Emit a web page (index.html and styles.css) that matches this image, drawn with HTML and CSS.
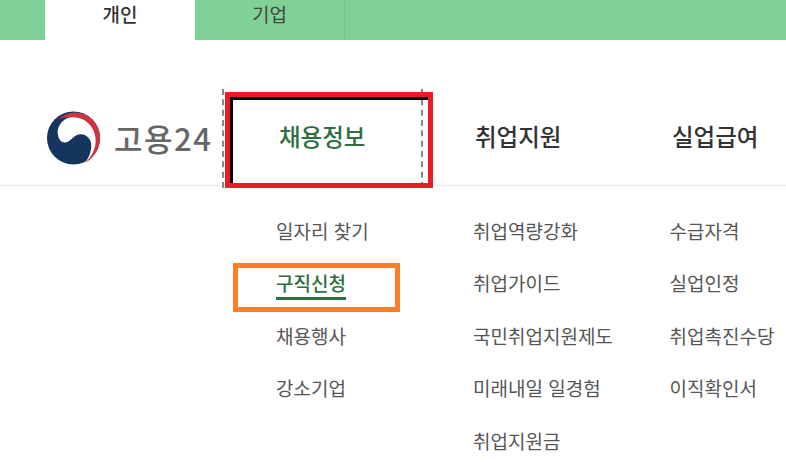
FILE: index.html
```html
<!DOCTYPE html>
<html lang="ko">
<head>
    <meta charset="UTF-8">
    <meta name="viewport" content="width=device-width, initial-scale=1.0">
    <title>고용24</title>
    <link rel="stylesheet" href="styles.css">
</head>
<body>

    <div class="top-tabs">
        <a class="tab active">개인</a>
        <a class="tab">기업</a>
    </div>

    <header class="site-header">
        <div class="logo">
            <svg class="logo-mark" width="64" height="64" viewBox="0 0 64 64">
                <circle cx="31.500" cy="32" r="26.500" fill="#15355f"/>
                <path d="M16 29C14 19 23 10 34 10.500C45 11 54 21 54.500 32C55 42 50 51 43 57C48 50 50 43 49 37C47.500 30.500 42 27.500 37 28.500C31 29.500 29 35.500 23.500 36.500C19.500 37 16.500 33 16 29Z" fill="#fff"/>
                <path d="M17 13C24 6.500 34 4.500 43 8.500C52 12.500 58.500 22 58 33C57.500 44 51 52 43 57.500C50 50.500 54.500 42 53.500 32C52.500 21 44 12.500 34 11.500C27 11 22 11.500 17 13Z" fill="#cf3341"/>
            </svg>
            <span class="logo-text">고용24</span>
        </div>
        <nav class="main-nav">
            <div class="nav-item current">
                <a>채용정보</a>
                <span class="mark-red"></span>
            </div>
            <div class="nav-item"><a>취업지원</a></div>
            <div class="nav-item"><a>실업급여</a></div>
        </nav>
    </header>

    <div class="sub-nav">
        <ul class="sub-col">
            <li>일자리 찾기</li>
            <li class="selected">
                <span>구직신청</span>
                <span class="mark-orange"></span>
            </li>
            <li>채용행사</li>
            <li>강소기업</li>
        </ul>
        <ul class="sub-col">
            <li>취업역량강화</li>
            <li>취업가이드</li>
            <li>국민취업지원제도</li>
            <li>미래내일 일경험</li>
            <li>취업지원금</li>
        </ul>
        <ul class="sub-col">
            <li>수급자격</li>
            <li>실업인정</li>
            <li>취업촉진수당</li>
            <li>이직확인서</li>
        </ul>
    </div>

</body>
</html>
```

FILE: styles.css
```css
body {
    font-family: "Noto Sans CJK KR", "Noto Sans", sans-serif;
    background-color: #fff;
    color: #333;
    margin: 0;
    overflow: hidden;
}

.top-tabs {
    display: flex;
    height: 40px;
    padding-left: 45px;
    background-color: #80d197;
}

.tab {
    width: 150px;
    box-sizing: border-box;
    font-size: 19px;
    line-height: 28px;
    text-align: center;
    color: #444;
    border-right: 1px solid #74c38b;
}

.tab.active {
    background-color: #fff;
    border-right: 0;
    color: #333;
    font-weight: 500;
}

.site-header {
    display: flex;
    height: 145px;
    border-bottom: 1px solid #eaeaea;
}

.logo {
    display: flex;
    flex: none;
    align-items: center;
    width: 222px;
    box-sizing: border-box;
    padding: 50px 0 0 42px;
    gap: 8px;
}

.logo-mark {
    flex: none;
}

.logo-text {
    font-size: 31px;
    font-weight: 500;
    color: #666;
    white-space: nowrap;
    letter-spacing: 1.500px;
}

.main-nav {
    display: flex;
    flex: 1;
    min-width: 0;
}

.nav-item {
    position: relative;
    flex: none;
    width: 197px;
    box-sizing: border-box;
    padding: 79px 0 0 52px;
    font-size: 23.500px;
    font-weight: 500;
    line-height: 34px;
    white-space: nowrap;
}

.nav-item:last-child {
    flex: 1;
    width: auto;
    min-width: 0;
}

.nav-item.current {
    width: 201px;
    height: 148px;
    color: #2e6f40;
    padding-left: 57px;
}

/* focus outline of the current item, only the sides show */
.nav-item.current::before {
    content: "";
    position: absolute;
    left: 0;
    right: 0;
    top: 49px;
    bottom: 0;
    border-left: 2px dashed #888;
    border-right: 2px dashed #888;
}

.mark-red {
    position: absolute;
    left: 3px;
    top: 52px;
    width: 208px;
    height: 96px;
    box-sizing: border-box;
    border: 5px solid #ed1c24;
    box-shadow: inset 3px 3px 0 #000;
}

.sub-nav {
    display: flex;
    padding: 31px 0 0 276px;
}

.sub-col {
    list-style: none;
    margin: 0;
    padding: 0;
    width: 197px;
    flex: none;
}

.sub-col:last-child {
    flex: 1;
    width: auto;
    min-width: 0;
    margin-left: -0.500px;
}

.sub-col li {
    position: relative;
    height: 52.400px;
    font-size: 19px;
    line-height: 27px;
    color: #555;
    white-space: nowrap;
}

.sub-col li.selected {
    color: #2e6f40;
    font-weight: 500;
}

.sub-col li.selected span:first-child {
    display: inline-block;
    border-bottom: 3px solid #2e6f40;
    line-height: 28px;
}

.mark-orange {
    position: absolute;
    left: -43px;
    top: -6px;
    width: 167px;
    height: 49px;
    box-sizing: border-box;
    border: 5px solid #fe7f27;
}
```
